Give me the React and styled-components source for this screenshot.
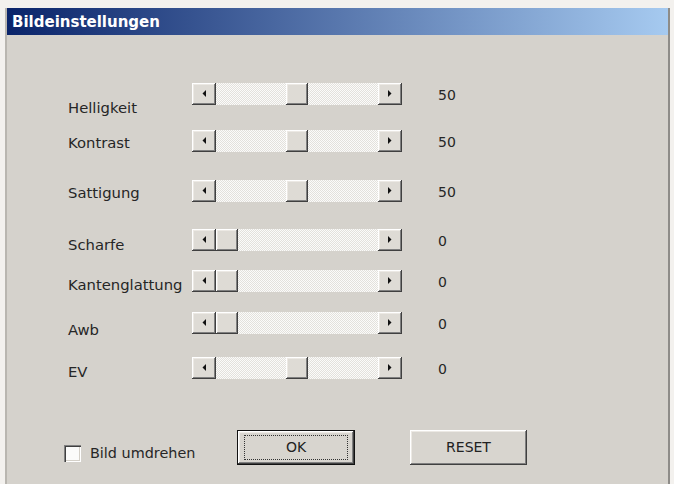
import React from 'react';
import styled, { createGlobalStyle } from 'styled-components';

const GlobalStyle = createGlobalStyle`
  html, body {
    margin: 0;
    padding: 0;
    background: #f3f1ee;
    overflow: hidden;
  }
  body {
    font-family: "DejaVu Sans", "Liberation Sans", sans-serif;
  }
`;

const Page = styled.div`
  width: 674px;
  height: 484px;
  box-sizing: border-box;
  padding: 8px 0 0 5px;
`;

const Window = styled.div`
  width: 665px;
  height: 476px;
  box-sizing: border-box;
  border-left: 2px solid #b9b6b0;
  border-right: 2px solid #8e8c88;
  background: #d5d2cc;
  display: flex;
  flex-direction: column;
`;

const TitleBar = styled.div`
  height: 27px;
  flex: none;
  display: flex;
  align-items: center;
  padding-left: 5px;
  background: linear-gradient(to right, #0a246a, #a6caf0);
  color: #fff;
  font-size: 15px;
  font-weight: bold;
`;

const Form = styled.div`
  display: flex;
  flex-direction: column;
  padding: 48px 0 0 61px;
`;

const Row = styled.div`
  display: flex;
  align-items: flex-start;
  height: 22px;
  margin-top: ${(p) => p.$gap}px;
`;

const Label = styled.div`
  width: 124px;
  padding-top: ${(p) => p.$drop}px;
  font-size: 14.8px;
  line-height: 16px;
  color: #262626;
  white-space: nowrap;
`;

const Value = styled.div`
  margin-left: 36px;
  padding-top: 1px;
  font-size: 14px;
  line-height: 22px;
  color: #262626;
`;

const raised = `
  background: #dedbd5;
  box-shadow: inset -1px -1px #404040, inset 1px 1px #ffffff,
    inset -2px -2px #808080, inset 2px 2px #ece9e4;
`;

const Slider = styled.div`
  width: 210px;
  height: 22px;
  display: flex;
`;

const ArrowButton = styled.div`
  width: 24px;
  height: 22px;
  flex: none;
  display: flex;
  align-items: center;
  justify-content: center;
  padding-bottom: 1px;
  box-sizing: border-box;
  ${raised}
`;

const Channel = styled.div`
  flex: 1;
  display: flex;
  background-color: #efeeeb;
  background-image: repeating-conic-gradient(#fbfbfa 0% 25%, #e3e1dc 0% 50%);
  background-size: 2px 2px;
`;

const Thumb = styled.div`
  width: 22px;
  height: 22px;
  flex: none;
  margin-left: ${(p) => p.$pos * 1.4}px;
  ${raised}
`;

const Footer = styled.div`
  display: flex;
  align-items: flex-start;
  margin-top: 51px;
  padding-left: 57px;
`;

const CheckGroup = styled.label`
  width: 173px;
  display: flex;
  align-items: center;
  gap: 9px;
  margin-top: 15px;
  font-size: 14.4px;
  line-height: 17px;
  color: #262626;
`;

const CheckBox = styled.span`
  width: 17px;
  height: 17px;
  flex: none;
  background: #fbfbfa;
  box-shadow: inset 1px 1px #808080, inset 2px 2px #404040,
    inset -1px -1px #ffffff, inset -2px -2px #d4d0c8;
`;

const Button = styled.div`
  width: ${(p) => p.$w}px;
  height: 35px;
  box-sizing: border-box;
  display: flex;
  font-size: 14px;
  color: #222;
  background: #d8d5cf;
  border: ${(p) => (p.$default ? '1px solid #111' : 'none')};
  box-shadow: inset -1px -1px #404040, inset 1px 1px #ffffff,
    inset -2px -2px #808080, inset 2px 2px #ece9e4;
  margin-right: ${(p) => p.$after || 0}px;
`;

const Caption = styled.span`
  flex: 1;
  display: flex;
  align-items: center;
  justify-content: center;
  margin: ${(p) => (p.$focus ? '4px 6px' : '0')};
  border: ${(p) => (p.$focus ? '1px dotted #333' : 'none')};
  padding-bottom: 1px;
`;

const Arrow = ({ dir }) => (
  <svg width="4" height="7" viewBox="0 0 4 7">
    {dir === 'left' ? (
      <polygon points="4,0 4,7 0.5,3.5" fill="#111" />
    ) : (
      <polygon points="0,0 0,7 3.5,3.5" fill="#111" />
    )}
  </svg>
);

const rows = [
  { label: 'Helligkeit', value: 50, pos: 50, gap: 0, drop: 17 },
  { label: 'Kontrast', value: 50, pos: 50, gap: 25, drop: 5 },
  { label: 'Sattigung', value: 50, pos: 50, gap: 28, drop: 5 },
  { label: 'Scharfe', value: 0, pos: 0, gap: 27, drop: 8 },
  { label: 'Kantenglattung', value: 0, pos: 0, gap: 19, drop: 7 },
  { label: 'Awb', value: 0, pos: 0, gap: 20, drop: 10 },
  { label: 'EV', value: 0, pos: 50, gap: 23, drop: 7 },
];

const App = () => {
  return (
    <Page>
      <GlobalStyle />
      <Window>
        <TitleBar>Bildeinstellungen</TitleBar>

        <Form>
          {rows.map((r) => (
            <Row key={r.label} $gap={r.gap}>
              <Label $drop={r.drop}>{r.label}</Label>
              <Slider>
                <ArrowButton>
                  <Arrow dir="left" />
                </ArrowButton>
                <Channel>
                  <Thumb $pos={r.pos} />
                </Channel>
                <ArrowButton>
                  <Arrow dir="right" />
                </ArrowButton>
              </Slider>
              <Value>{r.value}</Value>
            </Row>
          ))}
        </Form>

        <Footer>
          <CheckGroup>
            <CheckBox />
            Bild umdrehen
          </CheckGroup>
          <Button $w={118} $default $after={55}>
            <Caption $focus>OK</Caption>
          </Button>
          <Button $w={117}>
            <Caption>RESET</Caption>
          </Button>
        </Footer>
      </Window>
    </Page>
  );
};

export default App;
